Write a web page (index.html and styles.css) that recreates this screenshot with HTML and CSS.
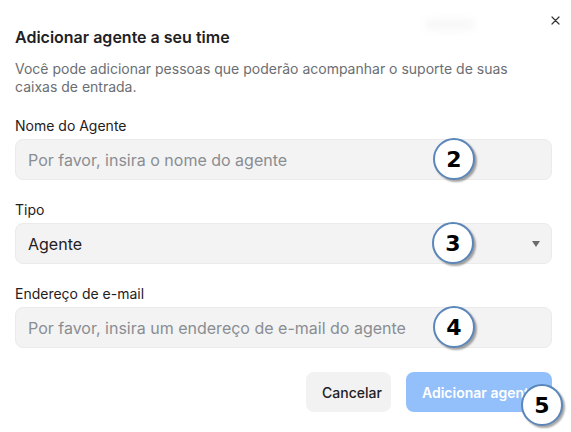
FILE: index.html
```html
<!DOCTYPE html>
<html lang="pt-BR">
<head>
<meta charset="utf-8">
<title>Adicionar agente</title>
<link rel="stylesheet" href="styles.css">
</head>
<body>
<div class="dialog">
  <div class="ghost ghost-top" aria-hidden="true"></div>
  <button class="close" aria-label="Fechar">
    <svg width="9" height="9" viewBox="0 0 9 9"><path d="M1 1L8 8M8 1L1 8" stroke="#333" stroke-width="1.2" stroke-linecap="round"/></svg>
  </button>
  <h1 class="title">Adicionar agente a seu time</h1>
  <p class="desc">Você pode adicionar pessoas que poderão acompanhar o suporte de suas caixas de entrada.</p>

  <div class="field">
    <label class="label">Nome do Agente</label>
    <div class="control"><span class="placeholder">Por favor, insira o nome do agente</span></div>
    <span class="badge badge-2">2</span>
  </div>

  <div class="field">
    <label class="label">Tipo</label>
    <div class="control select"><span class="value">Agente</span><span class="caret"></span></div>
    <span class="badge badge-3">3</span>
  </div>

  <div class="field">
    <label class="label">Endereço de e-mail</label>
    <div class="control"><span class="placeholder">Por favor, insira um endereço de e-mail do agente</span></div>
    <span class="badge badge-4">4</span>
  </div>

  <div class="actions">
    <button class="btn btn-secondary">Cancelar</button>
    <button class="btn btn-primary">Adicionar agente</button>
    <span class="badge badge-5">5</span>
  </div>
</div>
</body>
</html>
```

FILE: styles.css
```css
* { box-sizing: border-box; }
html, body { margin: 0; padding: 0; background: #ffffff; }
body {
  font-family: Inter, "Noto Sans", "Liberation Sans", sans-serif;
  color: #1f2023;
  width: 571px;
  height: 432px;
  overflow: hidden;
}
.dialog {
  position: relative;
  padding: 26px 19px 0 15px;
  height: 432px;
}
.ghost-top {
  position: absolute;
  left: 425px;
  top: 18px;
  width: 50px;
  height: 13px;
  background: #f4f4f4;
  border-radius: 7px;
  filter: blur(3px);
  opacity: 0.6;
}
.close {
  position: absolute;
  top: 15px;
  right: 10px;
  width: 11px;
  height: 11px;
  padding: 0;
  border: 0;
  background: transparent;
  display: flex;
  align-items: center;
  justify-content: center;
}
.title {
  margin: 0;
  font-size: 16px;
  line-height: 22px;
  font-weight: 600;
  color: #1f2023;
}
.desc {
  margin: 12px 0 0;
  font-size: 14px;
  line-height: 18px;
  color: #6b6e72;
  padding-right: 30px;
}
.field {
  position: relative;
  margin-top: 21px;
  display: flex;
  flex-direction: column;
  gap: 4px;
}
.label {
  font-size: 14px;
  line-height: 18px;
  color: #1f2023;
}
.control {
  height: 41px;
  border: 1px solid #ebebeb;
  background: #f3f3f3;
  border-radius: 8px;
  display: flex;
  align-items: center;
  padding: 0 12px;
  font-size: 16px;
}
.placeholder { color: #8a8d92; }
.value { color: #1f2023; flex: 1; }
.caret {
  width: 0;
  height: 0;
  border-left: 4px solid transparent;
  border-right: 4px solid transparent;
  border-top: 6px solid #6d6d6d;
  margin-right: -1px;
}
.actions {
  position: relative;
  margin-top: 24px;
  display: flex;
  justify-content: flex-end;
  gap: 15px;
}
.btn {
  height: 40px;
  border: 0;
  border-radius: 8px;
  font-family: inherit;
  font-size: 14px;
  padding: 0 16px;
  white-space: nowrap;
  overflow: hidden;
}
.btn-secondary {
  width: 85px;
  background: #f2f2f2;
  color: #1f2023;
  font-weight: 500;
}
.btn-primary {
  width: 146px;
  background: #93c0fa;
  color: #ffffff;
  font-weight: 600;
}
.badge {
  position: absolute;
  width: 42px;
  height: 42px;
  border-radius: 50%;
  background: #ffffff;
  border: 2px solid #5a86ba;
  box-shadow: 2px 2px 2px rgba(0, 0, 0, 0.35);
  display: flex;
  align-items: center;
  justify-content: center;
  font-family: "DejaVu Sans", Verdana, sans-serif;
  font-weight: 700;
  font-size: 22px;
  color: #000;
}
.badge-2 { left: 418px; top: 21px; }
.badge-3 { left: 417px; top: 21px; }
.badge-4 { left: 418px; top: 21px; }
.badge-5 { left: 506px; top: 12px; }
```
